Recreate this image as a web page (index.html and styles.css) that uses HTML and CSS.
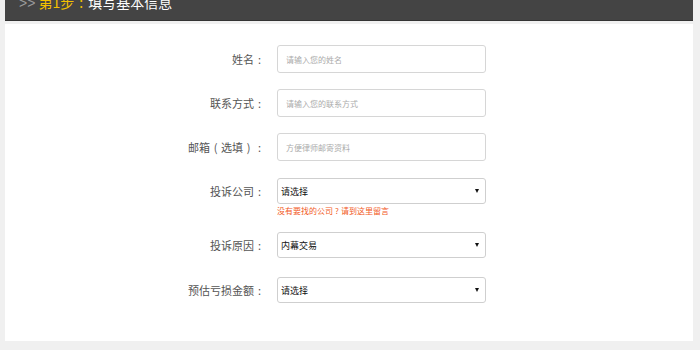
FILE: index.html
```html
<!DOCTYPE html>
<html lang="zh-CN">
<head>
<meta charset="utf-8">
<title>填写基本信息</title>
<link rel="stylesheet" href="styles.css">
</head>
<body>
<div class="page">
  <div class="step-bar">
    <h1 class="step-title"><span class="arrows">&gt;&gt;</span> <span class="step-no">第1步<span class="pc">:</span></span><span class="step-name">填写基本信息</span></h1>
  </div>
  <div class="panel">
    <form class="form">
      <div class="row row-input">
        <span class="label">姓名<span class="pc">:</span></span>
        <div class="field"><input class="input" type="text" placeholder="请输入您的姓名"></div>
      </div>
      <div class="row row-input">
        <span class="label">联系方式<span class="pc">:</span></span>
        <div class="field"><input class="input" type="text" placeholder="请输入您的联系方式"></div>
      </div>
      <div class="row row-input">
        <span class="label">邮箱<span class="pc">(</span>选填<span class="pc">)</span><span class="pc">:</span></span>
        <div class="field"><input class="input" type="text" placeholder="方便律师邮寄资料"></div>
      </div>
      <div class="row row-select row-noted">
        <span class="label">投诉公司<span class="pc">:</span></span>
        <div class="field">
          <div class="select"><span class="select-text">请选择</span><span class="caret"></span></div>
          <p class="note">没有要找的公司<span class="pc">?</span>请到这里留言</p>
        </div>
      </div>
      <div class="row row-select">
        <span class="label">投诉原因<span class="pc">:</span></span>
        <div class="field">
          <div class="select"><span class="select-text">内幕交易</span><span class="caret"></span></div>
        </div>
      </div>
      <div class="row row-select">
        <span class="label">预估亏损金额<span class="pc">:</span></span>
        <div class="field">
          <div class="select"><span class="select-text">请选择</span><span class="caret"></span></div>
        </div>
      </div>
    </form>
  </div>
</div>
</body>
</html>
```

FILE: styles.css
```css
* { box-sizing: border-box; }

html, body {
  margin: 0;
  padding: 0;
}

body {
  background: #f0f0f0;
  font-family: "Noto Sans CJK SC", "Liberation Sans", sans-serif;
  width: 700px;
  height: 350px;
  overflow: hidden;
}

.page {
  padding: 0 7px 0 5px;
}

.step-bar {
  height: 21px;
  background: #444444;
  border-bottom: 1px solid #333333;
  padding-left: 14px;
  overflow: hidden;
}

.step-title {
  margin: -5px 0 0 0;
  font-size: 14px;
  line-height: 14px;
  font-weight: normal;
  white-space: nowrap;
}

.pc {
  display: inline-block;
  width: 1em;
  text-align: center;
}

.arrows { color: #9a9a9a; font-family: "Liberation Sans", sans-serif; }
.step-no { color: #f3c100; }
.step-name { color: #ffffff; }

.panel {
  margin-top: 3px;
  background: #ffffff;
  height: 317px;
  padding-top: 21px;
}

.form {
  display: flex;
  flex-direction: column;
}

.row {
  display: grid;
  grid-template-columns: 260px 209px;
  column-gap: 12px;
  align-items: start;
}

.row-input { margin-bottom: 16px; }
.row-input:nth-child(3) { margin-bottom: 17px; }
.row-select { margin-bottom: 19px; }
.row-noted { margin-bottom: 16px; }

.label {
  display: block;
  text-align: right;
  font-size: 11px;
  color: #555555;
  white-space: nowrap;
}

.row-input .label { line-height: 28px; }
.row-select .label { line-height: 26px; }

.field {
  display: flex;
  flex-direction: column;
}

.input {
  width: 209px;
  height: 28px;
  border: 1px solid #d6d6d6;
  border-radius: 3px;
  padding: 0 8px;
  font-family: inherit;
  font-size: 8px;
  color: #333;
  outline: none;
  background: #fff;
}

.input::placeholder { color: #ababab; }

.select {
  height: 26px;
  border: 1px solid #cfcfcf;
  border-radius: 3px;
  display: flex;
  align-items: center;
  justify-content: space-between;
  padding: 0 6px 0 3px;
  background: #fff;
}

.select-text {
  font-size: 9px;
  color: #111;
}

.caret {
  width: 0;
  height: 0;
  border-left: 2.5px solid transparent;
  border-right: 2.5px solid transparent;
  border-top: 4px solid #111;
}

.note {
  margin: 1px 0 0 0;
  font-size: 8px;
  line-height: 11px;
  color: #f25a1e;
  white-space: nowrap;
}
```
